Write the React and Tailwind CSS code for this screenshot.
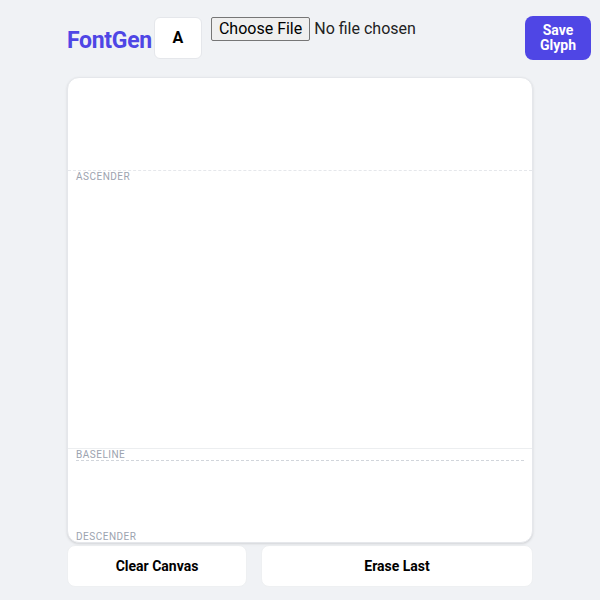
const App = () => {
  return (
    <div className="min-h-[600px] w-full bg-[#f0f2f5] font-['Roboto',sans-serif]">
      <div className="pl-[67px] pt-[16px]">
        <header className="flex h-[44px] w-[524px] items-start">
          <h1 className="mt-[12px] text-[23px] leading-[26px] font-bold tracking-[-0.3px] text-[#4f46e5]">FontGen</h1>
          <div className="mt-[1px] ml-[2px] flex h-[42px] w-[48px] items-center justify-center rounded-md border border-[#e5e7eb] bg-white text-[16px] font-bold text-black">
            A
          </div>
          <input
            type="file"
            className="mt-[1px] ml-[9px] text-[16px] leading-[20px] text-[#222] file:mr-[4px] file:rounded-[2px] file:border file:border-[#767676] file:bg-[#efefef] file:px-[7px] file:py-[1px] file:text-[16px] file:text-black"
          />
          <button className="ml-auto flex h-[44px] w-[66px] items-center justify-center rounded-lg bg-[#4f46e5] text-[14px] leading-[15px] font-bold text-white">
            Save
            <br />
            Glyph
          </button>
        </header>

        <div className="relative mt-[17px] h-[466px] w-[466px] rounded-xl border border-[#e5e7eb] bg-white shadow-sm">
          <div className="absolute top-[92px] right-0 left-0 border-t border-dashed border-[#e5e7eb]" />
          <span className="absolute top-[91px] left-[8px] text-[10px] tracking-[0.5px] text-[#9ca3af]">ASCENDER</span>
          <div className="absolute top-[370px] right-0 left-0 border-t border-[#eceef0]" />
          <span className="absolute top-[369px] left-[8px] text-[10px] tracking-[0.5px] text-[#9ca3af]">BASELINE</span>
          <div className="absolute top-[382px] right-[8px] left-[8px] border-t border-dashed border-[#d1d5db]" />
          <span className="absolute top-[451px] left-[8px] text-[10px] tracking-[0.5px] text-[#9ca3af]">DESCENDER</span>
        </div>

        <div className="mt-[2px] flex gap-[14px]">
          <button className="h-[42px] w-[180px] rounded-lg border border-[#eef0f2] bg-white text-[14px] font-bold text-black">
            Clear Canvas
          </button>
          <button className="h-[42px] w-[272px] rounded-lg border border-[#eef0f2] bg-white text-[14px] font-bold text-black">
            Erase Last
          </button>
        </div>
      </div>
    </div>
  );
};

export default App;
